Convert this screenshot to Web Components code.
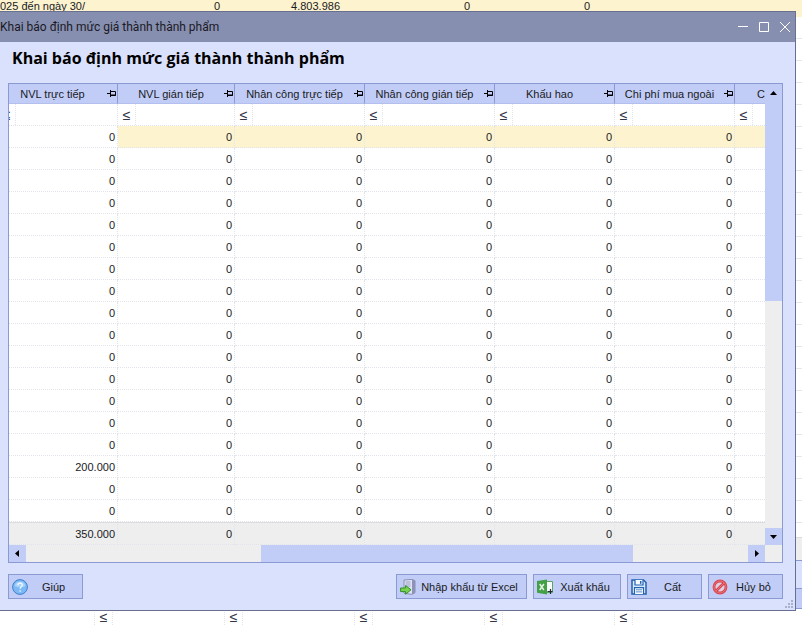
<!DOCTYPE html>
<html lang="vi">
<head>
<meta charset="utf-8">
<title>Khai báo định mức giá thành thành phẩm</title>
<style>
    html, body {
        margin: 0;
        min-height: 100vh;
    }
    body {
        position: relative;
        overflow: hidden;
        background: #fff;
        color: #1a1a24;
        font-family: "Liberation Sans", Arial, sans-serif;
        font-size: 11px;
        --accent: #c1cdf6;
        --accent-line: #8b9ad2;
        --surface: #dae1fc;
        --selected: #fdf3cf;
        --track: #eeeeee;
        --dots: #e2e4ec;
    }
</style>
</head>
<body>
<report-backdrop></report-backdrop>
<app-window caption="Khai báo định mức giá thành thành phẩm">
    <h1 slot="heading">Khai báo định mức giá thành thành phẩm</h1>
    <cost-grid></cost-grid>
    <tool-button slot="help" icon="help">Giúp</tool-button>
    <tool-button slot="actions" icon="import" size="large">Nhập khẩu từ Excel</tool-button>
    <tool-button slot="actions" icon="export" size="medium">Xuất khẩu</tool-button>
    <tool-button slot="actions" icon="save">Cất</tool-button>
    <tool-button slot="actions" icon="cancel">Hủy bỏ</tool-button>
</app-window>

<script>
const ICONS = {
    help: `<circle cx="8" cy="8" r="7.4" fill="#7db9f5" stroke="#3f7fcb"/>
        <path d="M2.5 7a5.6 5.2 0 0 1 11 0q-5 2.500-11 0z" fill="#a9d3fb"/>
        <path d="M5.800 6.300c0-3 4.500-3 4.500-.2 0 1.700-2.200 1.700-2.200 3.600M8.100 11.300v1.400" fill="none" stroke="#eef7ff" stroke-width="1.300"/>`,
    import: `<path d="M4 1l8-.6 3 1.300v12l-3 1.600-8-1z" fill="#dfe2f4" stroke="#8288ab" stroke-width=".9"/>
        <path d="M12 .6l3 1.300v11.800l-3 1.500z" fill="#8e91b8"/>
        <path d="M5.500 3h5M5.500 5h5M5.500 7h5" stroke="#9aa2c8"/>
        <path d="M.6 9h5V6.500l5.400 4.300-5.400 4.400v-2.600h-5z" fill="#7bd34c" stroke="#2f8f2c"/>`,
    export: `<path d="M8 2.500h7.500v11H8z" fill="#f7fbf7" stroke="#4a9a5a" stroke-width=".9"/>
        <path d="M0 2l10-1.600v15L0 13.800z" fill="#43a047"/>
        <path d="M2.700 5l4.200 6M6.900 5l-4.200 6" stroke="#e4f4e2" stroke-width="1.500"/>
        <path d="M10.500 12.500h5M13.500 10v5" fill="none" stroke="#252a35" stroke-width="1.200"/>`,
    save: `<path d="M1 1h11.500L15 3.500V15H1z" fill="#d8e9ff" stroke="#2260b0" stroke-width="1.500"/>
        <path d="M4 1v5h8V1" fill="#f5faff" stroke="#2260b0" stroke-width="1.200"/>
        <path d="M9.700 2v2.800" stroke="#2260b0" stroke-width="1.500"/>
        <path d="M3.500 15V8.700h9V15" fill="#fff" stroke="#2260b0" stroke-width="1.200"/>
        <path d="M5 10.800h6M5 12.900h6" stroke="#4f85c6"/>`,
    cancel: `<circle cx="8" cy="8" r="6" fill="#dfcfe2" stroke="#d84450" stroke-width="2.800"/>
        <path d="M4 12l8-8" stroke="#d84450" stroke-width="2.600"/>
        <circle cx="8" cy="8" r="6" fill="none" stroke="#f07b80" stroke-width=".8"/>
        <path d="M4 12l8-8" stroke="#f07b80" stroke-width=".8"/>`
};

class ToolButton extends HTMLElement {
    constructor() {
        super();
        this.attachShadow({ mode: 'open' });
    }

    connectedCallback() {
        this.shadowRoot.innerHTML = `
            <style>
                :host { display: block; width: 75px; }
                :host([size="medium"]) { width: 88px; }
                :host([size="large"]) { width: 131px; }
                button {
                    display: flex;
                    align-items: center;
                    box-sizing: border-box;
                    width: 100%;
                    height: 25px;
                    padding: 0 3px;
                    border: 1px solid var(--accent-line);
                    background: var(--accent);
                    color: inherit;
                    font: inherit;
                }
                svg { width: 16px; height: 16px; flex: none; }
                span { flex: 1; text-align: center; white-space: nowrap; }
            </style>
            <button type="button">
                <svg viewBox="0 0 16 16" aria-hidden="true">${ICONS[this.getAttribute('icon')]}</svg>
                <span><slot></slot></span>
            </button>
        `;
    }
}

// Scroll bar; before / thumb / after are the proportions of the track
class ScrollBar extends HTMLElement {
    constructor() {
        super();
        this.attachShadow({ mode: 'open' });
    }

    connectedCallback() {
        const vertical = this.getAttribute('direction') === 'vertical';
        const [before, thumb, after] = this.getAttribute('parts').split(' ');
        const arrows = vertical
            ? ['M5 11h7l-3.500-4z', 'M5 7h7l-3.500 4z']
            : ['M10 5v7l-4-3.500z', 'M7 5v7l4-3.500z'];
        this.shadowRoot.innerHTML = `
            <style>
                :host {
                    display: flex;
                    flex-direction: ${vertical ? 'column' : 'row'};
                    background: var(--track);
                }
                button {
                    flex: none;
                    width: 17px;
                    height: 17px;
                    padding: 0;
                    border: 0;
                    background: var(--accent);
                }
                svg { display: block; width: 17px; height: 17px; }
                .thumb { background: var(--accent); }
            </style>
            <button type="button" aria-label="${vertical ? 'Lên' : 'Trái'}"><svg viewBox="0 0 17 17"><path d="${arrows[0]}"/></svg></button>
            <div style="flex: ${before}"></div>
            <div class="thumb" style="flex: ${thumb}"></div>
            <div style="flex: ${after}"></div>
            <button type="button" aria-label="${vertical ? 'Xuống' : 'Phải'}"><svg viewBox="0 0 17 17"><path d="${arrows[1]}"/></svg></button>
        `;
    }
}

const COLUMNS = [
    { title: 'NVL trực tiếp', width: 120 },
    { title: 'NVL gián tiếp', width: 117 },
    { title: 'Nhân công trực tiếp', width: 130 },
    { title: 'Nhân công gián tiếp', width: 130 },
    { title: 'Khấu hao', width: 120 },
    { title: 'Chi phí mua ngoài', width: 120 },
    { title: 'C', last: true }
];

const PIN = '<svg class="pin" viewBox="0 0 10 9" aria-hidden="true"><path d="M0 4.500h3M3.500 1v7M3.500 2.500h5v4h-5M4 6h5" fill="none" stroke="#000"/></svg>';

function gridRow(first) {
    return COLUMNS.map((col, i) => `<td>${col.last ? '' : i === 0 ? first : '0'}</td>`).join('');
}

class CostGrid extends HTMLElement {
    constructor() {
        super();
        this.attachShadow({ mode: 'open' });
        const rows = Array(18).fill('0');
        rows[15] = '200.000';
        this.shadowRoot.innerHTML = `
            <style>
                :host {
                    display: grid;
                    grid-template-columns: minmax(0, 1fr) 17px;
                    border: 1px solid var(--accent-line);
                    background: #fff;
                }
                .view { overflow: hidden; }
                /* the view is scrolled a little into the first column */
                table {
                    width: calc(100% + 11px);
                    margin-left: -11px;
                    table-layout: fixed;
                    border-collapse: separate;
                    border-spacing: 0;
                }
                th, td {
                    box-sizing: border-box;
                    height: 22px;
                    padding: 0 2px 0 0;
                    border-right: 1px dotted var(--dots);
                    border-bottom: 1px dotted var(--dots);
                    font-weight: normal;
                    text-align: right;
                    white-space: nowrap;
                    overflow: hidden;
                }
                tr > :last-child { border-right: 0; padding: 0; }
                .titles th {
                    height: 20px;
                    padding: 0;
                    background: var(--accent);
                    border-right: 1px solid var(--accent-line);
                    border-bottom: 1px solid #b3c0ee;
                }
                .titles th:last-child { border-right: 0; }
                .title { display: flex; align-items: center; }
                .title span { flex: 1; text-align: center; }
                th:last-child .title span { text-align: right; }
                .pin { width: 10px; height: 9px; flex: none; }
                .filter td { padding: 0; }
                .filter div { display: flex; height: 21px; }
                .filter button {
                    flex: none;
                    width: 18px;
                    padding: 0;
                    border: 0;
                    border-right: 1px dotted var(--dots);
                    background: none;
                    color: #333648;
                    font: inherit;
                    font-size: 14px;
                }
                .filter input {
                    flex: 1;
                    min-width: 0;
                    padding: 0 2px;
                    border: 0;
                    background: none;
                    font: inherit;
                }
                tbody tr:first-child td:nth-child(n+2) { background: var(--selected); }
                tfoot td {
                    height: 23px;
                    background: var(--track);
                    border-top: 1px solid #dcdcdc;
                }
                .corner { background: var(--track); }
            </style>
            <div class="view">
                <table>
                    <colgroup>${COLUMNS.map(c => `<col${c.width ? ` style="width: ${c.width}px"` : ''}>`).join('')}</colgroup>
                    <thead>
                        <tr class="titles">${COLUMNS.map(c => `<th scope="col"><div class="title"><span>${c.title}</span>${c.last ? '' : PIN}</div></th>`).join('')}</tr>
                        <tr class="filter">${COLUMNS.map(c => `<td><div><button type="button">≤</button><input type="text" aria-label="${c.title}"></div></td>`).join('')}</tr>
                    </thead>
                    <tbody>${rows.map(v => `<tr>${gridRow(v)}</tr>`).join('')}</tbody>
                    <tfoot><tr>${gridRow('350.000')}</tr></tfoot>
                </table>
            </div>
            <scroll-bar direction="vertical" parts="0 200 227"></scroll-bar>
            <scroll-bar direction="horizontal" parts="235 372 115"></scroll-bar>
            <div class="corner"></div>
        `;
    }
}

class AppWindow extends HTMLElement {
    constructor() {
        super();
        this.attachShadow({ mode: 'open' });
    }

    connectedCallback() {
        this.shadowRoot.innerHTML = `
            <style>
                :host {
                    position: absolute;
                    top: 11px;
                    left: 0;
                    right: 6px;
                    border: 1px solid #686f91;
                    border-left: 0;
                    background: var(--surface);
                }
                header {
                    display: flex;
                    align-items: center;
                    justify-content: space-between;
                    height: 30px;
                    padding-right: 4px;
                    background: #878fb1;
                    font: 12px Roboto, "Noto Sans", sans-serif;
                }
                nav { display: flex; gap: 9px; }
                nav button { padding: 0; border: 0; background: none; }
                nav svg { display: block; width: 12px; height: 12px; fill: none; stroke: #fff; }
                main { padding: 0 12px 11px 8px; }
                ::slotted(h1) {
                    margin: 0;
                    padding: 4px 4px 13px;
                    font: bold 16px/24px "Open Sans", "Noto Sans", sans-serif;
                    color: #000;
                }
                footer { display: flex; gap: 6px; margin-top: 11px; }
                .space { flex: 1; }
                .grip {
                    position: absolute;
                    right: 1px;
                    bottom: 1px;
                    width: 9px;
                    height: 9px;
                    fill: #a9b0cc;
                }
            </style>
            <header>
                <span>${this.getAttribute('caption')}</span>
                <nav>
                    <button type="button" aria-label="Thu nhỏ"><svg viewBox="0 0 12 12"><path d="M1 5.500h10"/></svg></button>
                    <button type="button" aria-label="Phóng to"><svg viewBox="0 0 12 12"><path d="M1.500 1.500h9v9h-9z"/></svg></button>
                    <button type="button" aria-label="Đóng"><svg viewBox="0 0 12 12"><path d="M1 1l10 10M11 1l-10 10"/></svg></button>
                </nav>
            </header>
            <main>
                <slot name="heading"></slot>
                <slot></slot>
                <footer>
                    <slot name="help"></slot>
                    <div class="space"></div>
                    <slot name="actions"></slot>
                </footer>
            </main>
            <svg class="grip" viewBox="0 0 9 9" aria-hidden="true"><path d="M6 0h2v2h-2zM3 3h2v2h-2zM6 3h2v2h-2zM0 6h2v2h-2zM3 6h2v2h-2zM6 6h2v2h-2z"/></svg>
        `;
    }
}

// The report that stays open behind the window
class ReportBackdrop extends HTMLElement {
    constructor() {
        super();
        this.attachShadow({ mode: 'open' });
        this.shadowRoot.innerHTML = `
            <style>
                :host {
                    display: flex;
                    flex-direction: column;
                    min-height: 100vh;
                }
                .current {
                    display: grid;
                    grid-template-columns: 100px 120px 120px 130px 120px;
                    height: 17px;
                    line-height: 13px;
                    background: var(--selected);
                    text-align: right;
                }
                .current :first-child { text-align: left; }
                .rows {
                    flex: 1;
                    background: repeating-linear-gradient(#fff 0 21px, #e4e7ee 21px 22px);
                }
                .total { height: 22px; background: var(--track); border-top: 1px solid #dcdcdc; }
                .bar { height: 27px; border-top: 1px solid var(--accent-line); background: var(--surface); }
                .tabs { height: 19px; border: 1px solid var(--accent-line); border-width: 1px 0; background: var(--accent); }
                .filter {
                    display: flex;
                    gap: 111px;
                    height: 16px;
                    padding-left: 94px;
                }
                .filter span {
                    flex: none;
                    width: 17px;
                    border: 1px dotted var(--dots);
                    border-width: 0 1px;
                    color: #333648;
                    font-size: 14px;
                    line-height: 16px;
                    text-align: center;
                }
            </style>
            <div class="current"><span>025 đến ngày 30/</span><span>0</span><span>4.803.986</span><span>0</span><span>0</span></div>
            <div class="rows"></div>
            <div class="total"></div>
            <div class="bar"></div>
            <div class="tabs"></div>
            <div class="filter">${'<span>≤</span>'.repeat(5)}</div>
        `;
    }
}

customElements.define('tool-button', ToolButton);
customElements.define('scroll-bar', ScrollBar);
customElements.define('cost-grid', CostGrid);
customElements.define('app-window', AppWindow);
customElements.define('report-backdrop', ReportBackdrop);
</script>
</body>
</html>
